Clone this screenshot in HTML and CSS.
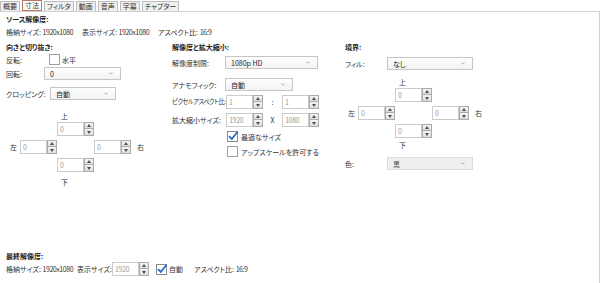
FILE: index.html
```html
<!DOCTYPE html>
<html lang="ja">
<head>
<meta charset="utf-8">
<link rel="stylesheet" href="styles.css">
</head>
<body>
<div class="tabs">
  <div class="tab">概要</div>
  <div class="tab active">寸法</div>
  <div class="tab">フィルタ</div>
  <div class="tab">動画</div>
  <div class="tab">音声</div>
  <div class="tab">字幕</div>
  <div class="tab">チャプター</div>
</div>
<div class="panel">
  <div class="title">ソース解像度:</div>
  <div class="info">
    <span>格納サイズ: <span class="num">1920x1080</span></span>
    <span>表示サイズ: <span class="num">1920x1080</span></span>
    <span>アスペクト比: <span class="num">16:9</span></span>
  </div>

  <div class="cols">
    <section class="col col1">
      <div class="title">向きと切り抜き:</div>
      <div class="row flip"><span class="lbl w43">反転:</span><span class="cb"></span><span class="cbtxt">水平</span></div>
      <div class="row rot"><span class="lbl w38">回転:</span><div class="sel w77"><span>0</span><svg class="chev" viewBox="0 0 6 4"><polyline points="0.5,0.5 3,3 5.5,0.5"/></svg></div></div>
      <div class="row crop"><span class="lbl w44">クロッピング:</span><div class="sel w66"><span>自動</span><svg class="chev" viewBox="0 0 6 4"><polyline points="0.5,0.5 3,3 5.5,0.5"/></svg></div></div>
      <div class="cgrid g1">
        <span class="c-top">上</span>
        <div class="spin s-top"><input type="text" value="0"><div class="btns"><span class="up"></span><span class="dn"></span></div></div>
        <span class="c-left">左</span>
        <div class="spin s-left"><input type="text" value="0"><div class="btns"><span class="up"></span><span class="dn"></span></div></div>
        <div class="spin s-right"><input type="text" value="0"><div class="btns"><span class="up"></span><span class="dn"></span></div></div>
        <span class="c-right">右</span>
        <div class="spin s-bot"><input type="text" value="0"><div class="btns"><span class="up"></span><span class="dn"></span></div></div>
        <span class="c-bot">下</span>
      </div>
    </section>

    <section class="col col2">
      <div class="title">解像度と拡大縮小:</div>
      <div class="row res"><span class="lbl w53">解像度制限:</span><div class="sel w93"><span>1080p HD</span><svg class="chev" viewBox="0 0 6 4"><polyline points="0.5,0.5 3,3 5.5,0.5"/></svg></div></div>
      <div class="row ana"><span class="lbl w53">アナモフィック:</span><div class="sel w68"><span>自動</span><svg class="chev" viewBox="0 0 6 4"><polyline points="0.5,0.5 3,3 5.5,0.5"/></svg></div></div>
      <div class="row par"><span class="lbl w54 tight">ピクセルアスペクト比:</span>
        <div class="spin dis"><input type="text" value="1"><div class="btns"><span class="up"></span><span class="dn"></span></div></div>
        <span class="sep">:</span>
        <div class="spin dis"><input type="text" value="1"><div class="btns"><span class="up"></span><span class="dn"></span></div></div>
      </div>
      <div class="row scl"><span class="lbl w54">拡大縮小サイズ:</span>
        <div class="spin dis"><input type="text" value="1920"><div class="btns"><span class="up"></span><span class="dn"></span></div></div>
        <span class="sep">X</span>
        <div class="spin dis"><input type="text" value="1080"><div class="btns"><span class="up"></span><span class="dn"></span></div></div>
      </div>
      <div class="row chk1"><span class="cb on"><svg viewBox="0 0 12 12"><polyline points="2,6.2 4.8,9 10.5,1.8"/></svg></span><span class="cbtxt">最適なサイズ</span></div>
      <div class="row chk2"><span class="cb"></span><span class="cbtxt">アップスケールを許可する</span></div>
    </section>

    <section class="col col3">
      <div class="title">境界:</div>
      <div class="row fill"><span class="lbl w42">フィル:</span><div class="sel w86"><span>なし</span><svg class="chev" viewBox="0 0 6 4"><polyline points="0.5,0.5 3,3 5.5,0.5"/></svg></div></div>
      <div class="cgrid g3">
        <span class="c-top">上</span>
        <div class="spin s-top"><input type="text" value="0"><div class="btns"><span class="up"></span><span class="dn"></span></div></div>
        <span class="c-left">左</span>
        <div class="spin s-left"><input type="text" value="0"><div class="btns"><span class="up"></span><span class="dn"></span></div></div>
        <div class="spin s-right"><input type="text" value="0"><div class="btns"><span class="up"></span><span class="dn"></span></div></div>
        <span class="c-right">右</span>
        <div class="spin s-bot"><input type="text" value="0"><div class="btns"><span class="up"></span><span class="dn"></span></div></div>
        <span class="c-bot">下</span>
      </div>
      <div class="row color"><span class="lbl w42">色:</span><div class="sel w86 disabled"><span>黒</span><svg class="chev" viewBox="0 0 6 4"><polyline points="0.5,0.5 3,3 5.5,0.5"/></svg></div></div>
    </section>
  </div>

  <div class="final">
    <div class="title">最終解像度:</div>
    <div class="frow">
      <span class="f1">格納サイズ: <span class="num">1920x1080</span></span>
      <span class="f2">表示サイズ:</span>
      <div class="spin dis"><input type="text" value="1920"><div class="btns"><span class="up"></span><span class="dn"></span></div></div>
      <span class="cb on fcb"><svg viewBox="0 0 12 12"><polyline points="2,6.2 4.8,9 10.5,1.8"/></svg></span>
      <span class="cbtxt">自動</span>
      <span class="f3">アスペクト比: <span class="num">16:9</span></span>
    </div>
  </div>
</div>
</body>
</html>
```

FILE: styles.css
```css
html, body {
  margin: 0;
  padding: 0;
}
body {
  width: 600px;
  height: 283px;
  overflow: hidden;
  background: #ffffff;
  font-family: "Noto Sans CJK JP", "Noto Sans", sans-serif;
  font-feature-settings: "palt";
  font-size: 7px;
  line-height: 10px;
  color: #333333;
  white-space: nowrap;
}
.num { letter-spacing: -0.45px; }

/* tabs */
.tabs {
  display: flex;
  align-items: flex-end;
  gap: 2px;
  height: 11px;
}
.tab {
  box-sizing: border-box;
  height: 10px;
  padding: 0 2px;
  border: 1px solid #bdbdbd;
  border-bottom: none;
  background: #f0f0f0;
  line-height: 9px;
  color: #333;
}
.tab.active {
  height: 11px;
  border: 1px solid #b97864;
  background: #ffffff;
}

/* panel */
.panel {
  box-sizing: border-box;
  width: 600px;
  height: 272px;
  border-top: 1px solid #d0d0d0;
  border-right: 1px solid #d0d0d0;
  padding: 0 0 7px 6px;
  display: flex;
  flex-direction: column;
}
.title {
  font-weight: bold;
  color: #222;
  margin-top: 2px;
  height: 10px;
}
.info {
  display: grid;
  grid-template-columns: 76px 76px auto;
  margin-top: 3px;
}
.cols {
  display: grid;
  grid-template-columns: 166px 173px 1fr;
  margin-top: 5px;
}
.col .title { margin-top: 0; }

.row {
  display: flex;
  align-items: center;
}
.lbl { flex: none; }
.tight {
  font-size: 6.3px;
  letter-spacing: -0.55px;
  overflow: visible;
}
.w38 { width: 38px; }
.w42 { width: 42px; }
.w43 { width: 43px; }
.w44 { width: 44px; }
.w53 { width: 53px; }
.w54 { width: 54px; }

/* select */
.sel {
  box-sizing: border-box;
  height: 13px;
  border: 1px solid #c6c6c6;
  background: linear-gradient(#fefefe, #f3f3f3);
  display: flex;
  align-items: center;
  justify-content: space-between;
  padding: 0 7px 0 5px;
  color: #222;
}
.sel.disabled {
  background: #efefef;
  border-color: #dadada;
  color: #555;
}
.w66 { width: 66px; }
.w68 { width: 68px; }
.w77 { width: 77px; }
.w86 { width: 86px; }
.w93 { width: 93px; }
.chev {
  width: 4px;
  height: 3px;
  fill: none;
  stroke: #8a8a8a;
  stroke-width: 1;
}

/* checkbox */
.cb {
  box-sizing: border-box;
  width: 11px;
  height: 11px;
  border: 1px solid #a0a0a0;
  background: #fff;
  flex: none;
  position: relative;
}
.cb.on { border-color: #8a8a8a; }
.cb svg {
  position: absolute;
  left: -1px;
  top: -2px;
  width: 12px;
  height: 12px;
  fill: none;
  stroke: #2468c8;
  stroke-width: 1.8;
}
.cbtxt { margin-left: 2px; }

/* spinner */
.spin {
  display: flex;
  height: 14px;
  width: 37px;
  flex: none;
}
.spin input {
  box-sizing: border-box;
  width: 27px;
  height: 14px;
  margin: 0;
  padding: 0 0 0 2px;
  border: 1px solid #cbcbcb;
  background: #fff;
  font: inherit;
  font-size: 7px;
  letter-spacing: -0.3px;
  color: #9a9a9a;
  outline: none;
}
.btns {
  width: 10px;
  height: 14px;
  display: flex;
  flex-direction: column;
}
.btns span {
  box-sizing: border-box;
  height: 7px;
  border: 1px solid #ababab;
  background: linear-gradient(#f5f5f5, #dedede);
  display: flex;
  align-items: center;
  justify-content: center;
}
.btns span + span { border-top: none; }
.btns .up::after {
  content: "";
  border-left: 2.5px solid transparent;
  border-right: 2.5px solid transparent;
  border-bottom: 3px solid #505050;
}
.btns .dn::after {
  content: "";
  border-left: 2.5px solid transparent;
  border-right: 2.5px solid transparent;
  border-top: 3px solid #505050;
}

/* crop grids */
.cgrid {
  display: grid;
  align-items: start;
}
.g1 {
  margin-top: 11px;
  grid-template-columns: 14px 37px 37px 37px auto;
  grid-template-rows: 11px 18px 18px 19px 10px;
}
.g3 {
  margin-top: 7px;
  grid-template-columns: 13px 37px 37px 37px auto;
  grid-template-rows: 11px 18px 18px 16px 10px;
}
.c-top { grid-area: 1 / 3; padding-left: 4px; }
.s-top { grid-area: 2 / 3; }
.c-left { grid-area: 3 / 1; text-align: right; padding-right: 3px; line-height: 14px; }
.s-left { grid-area: 3 / 2; }
.s-right { grid-area: 3 / 4; }
.c-right { grid-area: 3 / 5; padding-left: 6px; line-height: 14px; }
.s-bot { grid-area: 4 / 3; }
.c-bot { grid-area: 5 / 3; padding-left: 4px; }

/* column specifics */
.flip { margin-top: 2px; height: 11px; }
.rot { margin-top: 2px; }
.crop { margin-top: 7px; }

.res { margin-top: 4px; }
.ana { margin-top: 9px; }
.par { margin-top: 4px; }
.scl { margin-top: 4px; }
.sep {
  width: 19px;
  text-align: center;
  color: #333;
}
.chk1 { margin-top: 4px; padding-left: 55px; }
.chk2 { margin-top: 4px; padding-left: 55px; }
.chk1 .cbtxt, .chk2 .cbtxt { margin-left: 3px; }

.fill { margin-top: 5px; }
.color { margin-top: 7px; }

/* final */
.final { margin-top: auto; }
.frow {
  display: flex;
  align-items: center;
  height: 14px;
  margin-top: 1px;
}
.f1 { width: 71px; flex: none; }
.f2 { width: 35px; flex: none; }
.fcb { margin-left: 7px; }
.f3 { margin-left: 11px; }
```
